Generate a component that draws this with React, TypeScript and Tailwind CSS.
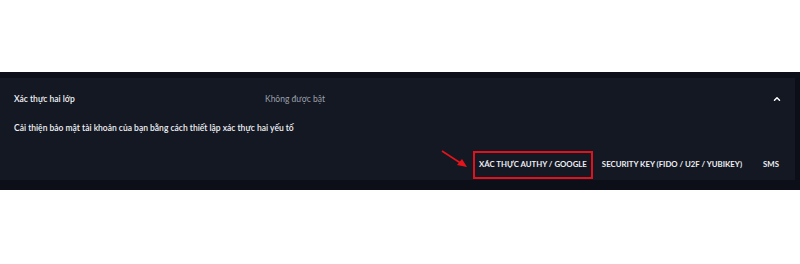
import { ChevronUp } from 'lucide-react';

const tabs = ['XÁC THỰC AUTHY / GOOGLE', 'SECURITY KEY (FIDO / U2F / YUBIKEY)', 'SMS'];

const App = () => {
    return (
        <div className="w-[800px] h-[264px] bg-white pt-[72px] font-['Lato',sans-serif]">
            <div className="bg-[#0c0f18] pt-[6px] pb-[10px]">
                <div className="mr-[5px] bg-[#141823] h-[102px] flex flex-col">
                    <div className="flex items-center h-[42px] pl-[14px] pr-[13px]">
                        <span className="w-[251px] text-[8.5px] font-semibold text-[#f2f3f6]">Xác thực hai lớp</span>
                        <span className="text-[8.5px] text-[#9aa0ab]">Không được bật</span>
                        <ChevronUp className="ml-auto w-[10px] h-[10px] text-white" strokeWidth={3.5} />
                    </div>
                    <p className="pl-[14px] text-[8.5px] font-semibold text-[#f2f3f6] mt-[2px]">
                        Cải thiện bảo mật tài khoản của bạn bằng cách thiết lập xác thực hai yếu tố
                    </p>
                    <div className="mt-auto flex items-center justify-end pr-[16px]">
                        <svg width="28" height="20" viewBox="0 0 28 20" className="mr-[4px] mb-[10px]">
                            <line x1="1" y1="1" x2="21" y2="14" stroke="#e5141c" strokeWidth="1.6" />
                            <polygon points="26,17 16,15 21,9" fill="#e5141c" />
                        </svg>
                        {tabs.map((t, i) => (
                            <span
                                key={t}
                                className={`text-[7.8px] font-bold text-[#eceef2] h-[28px] flex items-center ${
                                    i === 0 ? 'border-2 border-[#e0121b] px-[4px]' : i === 1 ? 'ml-[9px]' : 'ml-[21px]'
                                }`}
                            >
                                {t}
                            </span>
                        ))}
                    </div>
                </div>
            </div>
        </div>
    );
};

export default App;
